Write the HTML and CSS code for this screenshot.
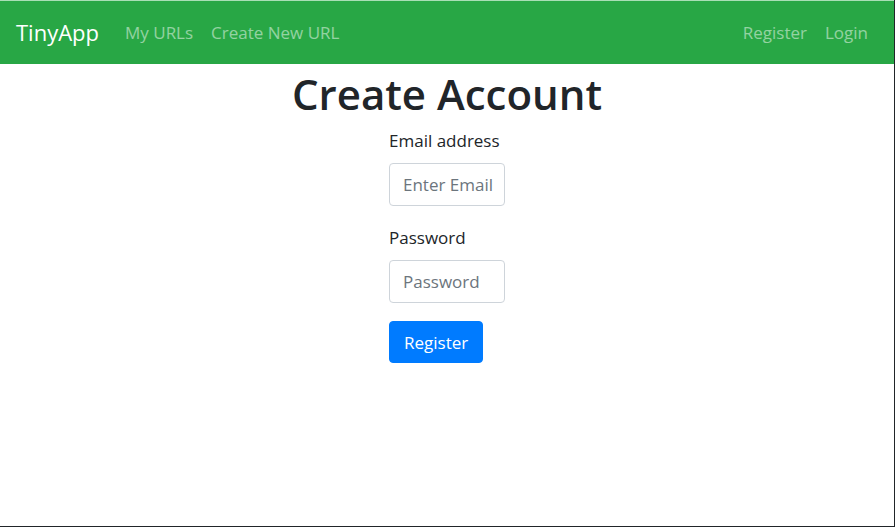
FILE: index.html
```html
<!DOCTYPE html>
<html lang="en">
<head>
<meta charset="utf-8">
<meta name="viewport" content="width=device-width, initial-scale=1">
<title>TinyApp</title>
<link rel="stylesheet" href="styles.css">
</head>
<body>
<header>
<nav class="navbar">
<a class="brand" href="#">TinyApp</a>
<div class="links">
<a href="#">My URLs</a>
<a href="#">Create New URL</a>
</div>
<div class="links account">
<a href="#">Register</a>
<a href="#">Login</a>
</div>
</nav>
</header>
<main>
<h1>Create Account</h1>
<form class="form">
<div class="group">
<label for="email">Email address</label>
<input id="email" type="email" placeholder="Enter Email">
</div>
<div class="group">
<label for="password">Password</label>
<input id="password" type="password" placeholder="Password">
</div>
<button type="submit">Register</button>
</form>
</main>
</body>
</html>
```
FILE: styles.css
```css
* {
  box-sizing: border-box;
}

body {
  display: flex;
  flex-direction: column;
  min-height: 100vh;
  margin: 0;
  border-right: 1px solid #212529;
  border-bottom: 1px solid #212529;
  background: #fff;
  color: #212529;
  font: 17px/27px "Open Sans", "Noto Sans", sans-serif;
}

.navbar {
  display: flex;
  align-items: center;
  height: 64px;
  padding: 0 26px 0 16px;
  border-top: 1px solid #a9dfb5;
  background: #28a745;
}

.navbar a {
  color: rgba(255, 255, 255, 0.5);
  text-decoration: none;
}

.navbar .brand {
  margin-right: 26px;
  color: #fff;
  font-size: 22px;
}

.links {
  display: flex;
  gap: 18px;
}

.account {
  margin-left: auto;
}

main {
  display: flex;
  flex-direction: column;
  align-items: center;
}

h1 {
  margin: 3px 0 6px;
  font-size: 42px;
  font-weight: 600;
  line-height: 54px;
}

.form {
  width: 116px;
}

.group {
  margin-bottom: 18px;
}

label {
  display: block;
  margin-bottom: 9px;
  white-space: nowrap;
}

input {
  display: block;
  width: 100%;
  height: 43px;
  padding: 6px 8px 6px 13px;
  border: 1px solid #ced4da;
  border-radius: 4px;
  background: #fff;
  color: #495057;
  font: inherit;
}

input::placeholder {
  color: #6c757d;
  opacity: 1;
}

button {
  height: 42px;
  padding: 0 14px;
  border: 1px solid #007bff;
  border-radius: 4px;
  background: #007bff;
  color: #fff;
  font: inherit;
}
```
